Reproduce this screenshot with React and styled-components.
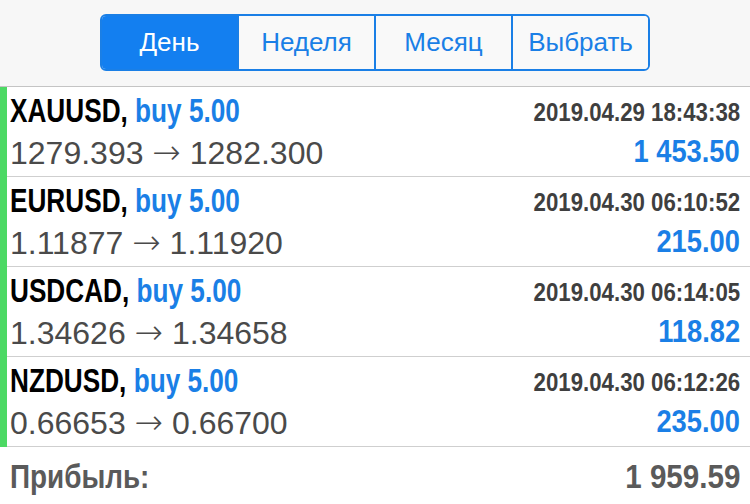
import React from 'react';
import styled, { createGlobalStyle } from 'styled-components';

const GlobalStyle = createGlobalStyle`
  html, body {
    margin: 0;
    padding: 0;
    background: #ffffff;
    font-family: "Liberation Sans", Arial, sans-serif;
  }
`;

// no condensed face installed, so the bold labels are narrowed by scaleX
const Condensed = styled.div`
  font-family: "Liberation Sans", Arial, sans-serif;
  font-weight: bold;
  line-height: 1;
  white-space: nowrap;
  transform: scaleX(${p => p.squeeze || 0.8});
  transform-origin: ${p => (p.right ? 'right' : 'left')} center;
`;

const Page = styled.div`
  width: 750px;
  height: 504px;
  overflow: hidden;
  background: #fff;
`;

const Header = styled.div`
  height: 87px;
  background: #f7f7f7;
  border-bottom: 1px solid #c4c4c4;
  display: flex;
  align-items: flex-start;
  justify-content: center;
  padding-top: 14px;
  box-sizing: border-box;
`;

const Segmented = styled.div`
  display: flex;
  width: 550px;
  height: 57px;
  border: 2px solid #1a7fe6;
  border-radius: 6px;
  overflow: hidden;
  box-sizing: border-box;
`;

const Segment = styled.div`
  flex: 1;
  display: flex;
  align-items: center;
  justify-content: center;
  font-size: 26px;
  color: ${p => (p.active ? '#fff' : '#1a7fe6')};
  background: ${p => (p.active ? '#137ff0' : '#f9f9f9')};
  border-left: ${p => (p.first ? 'none' : '2px solid #1a7fe6')};
`;

const Row = styled.div`
  display: flex;
  height: 90px;
`;

const Bar = styled.div`
  width: 7px;
  background: #4cd964;
`;

const Content = styled.div`
  flex: 1;
  display: grid;
  grid-template-columns: 1fr auto;
  grid-template-rows: 40px 49px;
  border-bottom: 1px solid #cfcfcf;
  padding: 0 10px 0 3px;
`;

const Symbol = styled(Condensed)`
  font-size: 34px;
  color: #000;
  align-self: end;
`;

const Buy = styled.span`
  color: #1a7fe6;
`;

const Prices = styled.div`
  font-size: 32px;
  color: #4a4a4a;
  align-self: center;
  line-height: 1;
  white-space: nowrap;
`;

const Arrow = styled.span`
  font-family: "DejaVu Sans", sans-serif;
  font-size: 34px;
  font-weight: 200;
  color: #4a4a4a;
`;

const Time = styled(Condensed)`
  font-size: 25px;
  color: #3f3f3f;
  align-self: end;
  justify-self: end;
  padding-bottom: 2px;
`;

const Amount = styled(Condensed)`
  font-size: 31px;
  color: #1a7fe6;
  align-self: center;
  justify-self: end;
`;

const Footer = styled.div`
  display: flex;
  justify-content: space-between;
  align-items: center;
  height: 57px;
  padding: 0 10px;
`;

const Total = styled(Condensed)`
  font-size: 34px;
  color: #5a5a5a;
`;

const trades = [
  { sym: 'XAUUSD', lot: 'buy 5.00', open: '1279.393', close: '1282.300', time: '2019.04.29 18:43:38', profit: '1 453.50' },
  { sym: 'EURUSD', lot: 'buy 5.00', open: '1.11877', close: '1.11920', time: '2019.04.30 06:10:52', profit: '215.00' },
  { sym: 'USDCAD', lot: 'buy 5.00', open: '1.34626', close: '1.34658', time: '2019.04.30 06:14:05', profit: '118.82' },
  { sym: 'NZDUSD', lot: 'buy 5.00', open: '0.66653', close: '0.66700', time: '2019.04.30 06:12:26', profit: '235.00' },
];

const tabs = ['День', 'Неделя', 'Месяц', 'Выбрать'];

export default function App() {
  return (
    <Page>
      <GlobalStyle />
      <Header>
        <Segmented>
          {tabs.map((t, i) => (
            <Segment key={t} active={i === 0} first={i === 0}>{t}</Segment>
          ))}
        </Segmented>
      </Header>
      {trades.map(tr => (
        <Row key={tr.sym}>
          <Bar />
          <Content>
            <Symbol squeeze={0.77}>{tr.sym}, <Buy>{tr.lot}</Buy></Symbol>
            <Time right squeeze={0.89}>{tr.time}</Time>
            <Prices>{tr.open} <Arrow>→</Arrow> {tr.close}</Prices>
            <Amount right squeeze={0.88}>{tr.profit}</Amount>
          </Content>
        </Row>
      ))}
      <Footer>
        <Total squeeze={0.82}>Прибыль:</Total>
        <Total right squeeze={0.87}>1 959.59</Total>
      </Footer>
    </Page>
  );
}
